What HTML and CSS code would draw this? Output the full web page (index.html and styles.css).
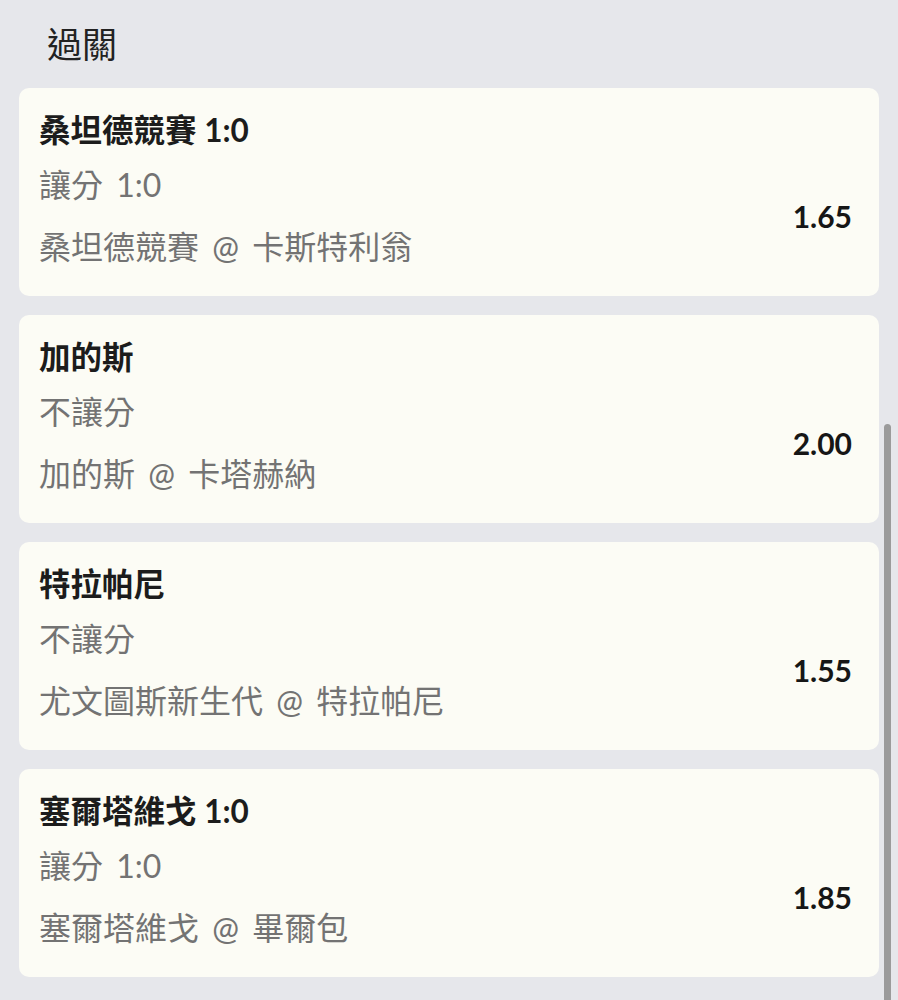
FILE: index.html
```html
<!DOCTYPE html>
<html lang="zh-Hant">
<head>
    <meta charset="UTF-8">
    <meta name="viewport" content="width=device-width, initial-scale=1.0">
    <title>過關</title>
    <link rel="stylesheet" href="styles.css">
</head>
<body>
    <h1 class="page-title">過關</h1>

    <div class="bet-list">
        <div class="bet-card">
            <div class="bet-name">桑坦德競賽 1:0</div>
            <div class="bet-row">
                <div class="bet-info">
                    <div>讓分 1:0</div>
                    <div>桑坦德競賽 @ 卡斯特利翁</div>
                </div>
                <div class="bet-odds">1.65</div>
            </div>
        </div>

        <div class="bet-card">
            <div class="bet-name">加的斯</div>
            <div class="bet-row">
                <div class="bet-info">
                    <div>不讓分</div>
                    <div>加的斯 @ 卡塔赫納</div>
                </div>
                <div class="bet-odds">2.00</div>
            </div>
        </div>

        <div class="bet-card">
            <div class="bet-name">特拉帕尼</div>
            <div class="bet-row">
                <div class="bet-info">
                    <div>不讓分</div>
                    <div>尤文圖斯新生代 @ 特拉帕尼</div>
                </div>
                <div class="bet-odds">1.55</div>
            </div>
        </div>

        <div class="bet-card">
            <div class="bet-name">塞爾塔維戈 1:0</div>
            <div class="bet-row">
                <div class="bet-info">
                    <div>讓分 1:0</div>
                    <div>塞爾塔維戈 @ 畢爾包</div>
                </div>
                <div class="bet-odds">1.85</div>
            </div>
        </div>
    </div>

    <div class="scroll-thumb"></div>
</body>
</html>
```

FILE: styles.css
```css
body {
    margin: 0;
    background-color: #e6e7eb;
    font-family: Lato, "Noto Sans CJK TC", sans-serif;
    color: #1c1c1c;
}

.page-title {
    margin: 0;
    padding: 22px 0 0 47px;
    height: 66px;
    box-sizing: border-box;
    font-size: 35px;
    font-weight: normal;
    line-height: 44px;
    color: #222;
}

.bet-list {
    display: flex;
    flex-direction: column;
    gap: 19px;
    padding: 22px 19px 24px 19px;
}

.bet-card {
    background-color: #fcfcf5;
    border-radius: 10px;
    padding: 18px 27px 18px 20px;
}

.bet-name {
    font-size: 31.5px;
    font-weight: bold;
    line-height: 48px;
}

.bet-row {
    display: flex;
    align-items: center;
    justify-content: space-between;
}

.bet-info {
    font-size: 32px;
    line-height: 62px;
    word-spacing: 5px;
    color: #737373;
}

.bet-odds {
    font-size: 30px;
    font-weight: bold;
    color: #161616;
}

.scroll-thumb {
    position: absolute;
    top: 424px;
    right: 7px;
    width: 7px;
    height: 580px;
    border-radius: 4px;
    background-color: #9b9b9b;
}
```
